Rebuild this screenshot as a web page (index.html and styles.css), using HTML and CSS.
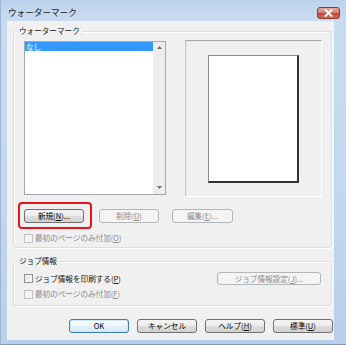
FILE: index.html
```html
<!DOCTYPE html>
<html lang="ja">
<head>
<meta charset="utf-8">
<link rel="stylesheet" href="styles.css">
</head>
<body>
<div class="window">
  <div class="titlebar">
    <span class="title">ウォーターマーク</span>
    <span class="close"><svg width="9" height="8" viewBox="0 0 9 8"><path d="M1.5 1 L7.5 7 M7.5 1 L1.5 7" stroke="#fff" stroke-width="2" stroke-linecap="square"/></svg></span>
  </div>
  <div class="client">
    <div class="group g1">
      <span class="legend">ウォーターマーク</span>
      <div class="toprow">
        <div class="listbox">
          <div class="items"><div class="item sel">なし</div></div>
          <div class="vscroll">
            <svg width="5" height="3" viewBox="0 0 5 3"><path d="M0 3 L2.5 0 L5 3 Z" fill="#6d6d6d"/></svg>
            <svg width="5" height="3" viewBox="0 0 5 3"><path d="M0 0 L2.5 3 L5 0 Z" fill="#6d6d6d"/></svg>
          </div>
        </div>
        <div class="preview"><div class="page"></div></div>
      </div>
      <div class="btnrow">
        <div class="hl"><button class="btn w60">新規(<u>N</u>)...</button><span class="redbox"></span></div>
        <button class="btn dis w60 gapa">削除(<u>D</u>)</button>
        <button class="btn dis w61 gapb">編集(<u>E</u>)...</button>
      </div>
      <div class="check dis c1"><span class="box"></span>最初のページのみ付加(<u>O</u>)</div>
    </div>
    <div class="group g2">
      <span class="legend">ジョブ情報</span>
      <div class="jobrow">
        <div class="check"><span class="box"></span>ジョブ情報を印刷する(<u>P</u>)</div>
        <button class="btn dis jobbtn">ジョブ情報設定(<u>J</u>)...</button>
      </div>
      <div class="check dis c2"><span class="box"></span>最初のページのみ付加(<u>F</u>)</div>
    </div>
    <div class="bottom">
      <button class="btn def w60">OK</button>
      <button class="btn w60">キャンセル</button>
      <button class="btn w60">ヘルプ(<u>H</u>)</button>
      <button class="btn w60">標準(<u>U</u>)</button>
    </div>
  </div>
</div>
</body>
</html>
```

FILE: styles.css
```css
* { box-sizing: border-box; }
html, body { margin: 0; padding: 0; }
body {
  font-family: "Noto Sans CJK JP", "Noto Sans", sans-serif;
  font-size: 7.6px;
  color: #000;
  background: #fff;
}
u { text-decoration: underline; text-underline-offset: 1px; }

.window {
  width: 346px;
  height: 345px;
  display: flex;
  flex-direction: column;
  background: linear-gradient(180deg, #bcd2ec 0px, #c9dbf0 20px, #c3d7ee 200px, #b9d0ea 100%);
  border-left: 1px solid #9db6d3;
  border-bottom: 1px solid #7f9dbf;
}
.titlebar {
  height: 21px;
  flex: none;
  display: flex;
  justify-content: space-between;
  align-items: flex-start;
  padding: 5px 6px 0 7px;
}
.title {
  font-size: 8.6px;
  line-height: 14px;
  color: #1e1e1e;
}
.close {
  margin-top: 2px;
  width: 23px;
  height: 12px;
  border: 1px solid #8d3a30;
  border-radius: 3px;
  background: linear-gradient(180deg, #e8a896 0%, #d98070 45%, #c4483a 55%, #cf6a55 100%);
  display: flex;
  align-items: center;
  justify-content: center;
}
.client {
  flex: 1;
  margin: 0 12px 4px 6px;
  background: #f0f0f0;
  padding: 10px 1px 0 6px;
  display: flex;
  flex-direction: column;
}
.group {
  position: relative;
  border: 1px solid #d5dfe5;
  border-radius: 3px;
  margin-right: 1px;
  box-shadow: inset 1px 1px 0 #fff, 1px 1px 0 #fff;
}
.legend {
  position: absolute;
  left: 3px;
  top: -7px;
  padding: 0 2px;
  line-height: 12px;
  background: #f0f0f0;
  color: #111;
}
.g1 { height: 217px; padding: 9px 0 0 10px; }
.g2 { height: 45px; margin-top: 13px; padding: 10px 10px 0 10px; }

.toprow { display: flex; align-items: flex-start; }
.listbox {
  width: 142px;
  height: 154px;
  border: 1px solid #a4a7ad;
  background: #fff;
  display: flex;
}
.items { flex: 1; }
.item { height: 9px; line-height: 9px; padding-left: 1px; white-space: nowrap; }
.item.sel { background: #3399ff; color: #fff; }
.vscroll {
  width: 12px;
  background: #ededed;
  display: flex;
  flex-direction: column;
  justify-content: space-between;
  align-items: center;
  padding: 4px 0 5px;
}
.preview {
  width: 137px;
  height: 157px;
  margin-top: -1px;
  margin-left: 19px;
  border-top: 1px solid #a8a8a8;
  border-left: 1px solid #c8c8c8;
  border-right: 1px solid #fff;
  border-bottom: 1px solid #fff;
  box-shadow: inset 1px 1px 0 #e6e6e6;
  display: flex;
  align-items: center;
  justify-content: center;
}
.page {
  width: 91px;
  height: 128px;
  background: #fff;
  border-top: 1px solid #8a8a8a;
  border-left: 1px solid #8a8a8a;
  border-right: 2px solid #333;
  border-bottom: 2px solid #333;
}

.btn {
  font: inherit;
  height: 14px;
  line-height: 12px;
  padding: 0;
  border: 1px solid #707070;
  border-radius: 3px;
  background: linear-gradient(180deg, #f4f4f4 0%, #ececec 50%, #dedede 51%, #d1d1d1 100%);
  color: #000;
  text-align: center;
  white-space: nowrap;
}
.btn.dis {
  border-color: #b2b6b9;
  background: #f4f4f4;
  color: #8a8a8a;
}
.btn.def {
  border-color: #3c7fb1;
  background: linear-gradient(180deg, #f8fbfe 0%, #eef6fc 50%, #e2eff9 51%, #d9eaf7 100%);
  box-shadow: inset 0 0 0 1px #cfe8fa;
}
.w60 { width: 60px; }
.w61 { width: 61px; }
.btnrow { display: flex; margin-top: 12px; }
.gapa { margin-left: 15px; }
.gapb { margin-left: 13px; }
.hl { position: relative; display: flex; }
.redbox {
  position: absolute;
  left: -6px;
  top: -7px;
  right: -8px;
  bottom: -6px;
  border: 2px solid #e5161b;
  border-radius: 4px;
}

.check {
  display: flex;
  align-items: center;
  height: 10px;
  line-height: 10px;
  white-space: nowrap;
  color: #111;
}
.check .box {
  width: 9px;
  height: 9px;
  margin-right: 2px;
  border: 1px solid #8f8f8f;
  background: linear-gradient(135deg, #dcdcdc, #fdfdfd);
  box-shadow: inset 0 0 0 1px #f4f4f4;
}
.check.dis { color: #8d8d8d; }
.check.dis .box { border-color: #c2c2c2; background: #f4f4f4; }
.c1 { margin-top: 10px; }
.jobrow {
  display: flex;
  align-items: center;
  justify-content: space-between;
  height: 13px;
}
.jobbtn { width: 104px; height: 13px; line-height: 11px; }
.c2 { margin-top: 4px; }

.bottom {
  display: flex;
  justify-content: flex-end;
  gap: 8px;
  margin-top: 13px;
}
```
